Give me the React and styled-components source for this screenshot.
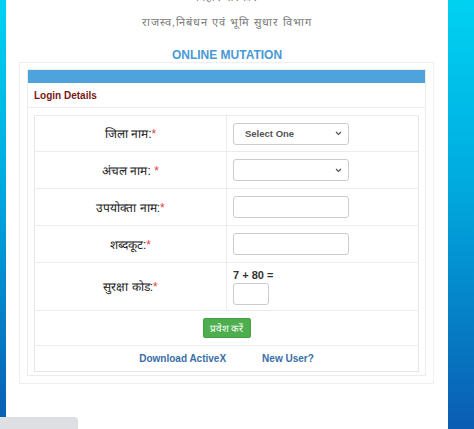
import React from 'react'
import styled, { createGlobalStyle } from 'styled-components'

const Global = createGlobalStyle`
  html, body {
    margin: 0;
    padding: 0;
    height: 429px;
    overflow: hidden;
  }
  body {
    background: linear-gradient(180deg, #00d2f2 0%, #00a8de 45%, #0a5cb2 100%);
    font-family: "Liberation Sans", Arial, sans-serif;
  }
`

const Page = styled.div`
  margin-left: 6px;
  width: 442px;
  height: 429px;
  background: #fff;
  overflow: hidden;
`

const Header = styled.div`
  text-align: center;
  color: #777;
  font-size: 11px;
  letter-spacing: 1px;
`

const HeadLine = styled.div`
  height: ${p => p.h}px;
  line-height: ${p => p.h}px;
  margin-top: ${p => p.top || 0}px;
`

const Title = styled.h3`
  margin: 14px 0 0;
  text-align: center;
  color: #4a98d4;
  font-size: 12px;
  font-weight: bold;
  height: 14px;
  line-height: 14px;
`

const Outer = styled.div`
  margin: 0 0 0 13px;
  width: 399px;
  padding: 6px 7px 7px;
  border: 1px solid #eee;
`

const Panel = styled.div`
  border: 1px solid #ececec;
`

const PanelBar = styled.div`
  height: 13px;
  background: #4fa3dd;
`

const PanelTitle = styled.div`
  height: 24px;
  line-height: 26px;
  padding-left: 6px;
  color: #7b1616;
  font-size: 10px;
  font-weight: bold;
  border-bottom: 1px solid #eee;
`

const PanelBody = styled.div`
  padding: 7px 6px 3px;
`

const Table = styled.table`
  width: 100%;
  border-collapse: collapse;
  border: 1px solid #e6e6e6;
`

const Row = styled.tr`
  height: ${p => p.h}px;
  border-top: 1px solid #ececec;
`

const Label = styled.td`
  width: 191px;
  padding: 0;
  text-align: center;
  font-size: 12px;
  color: #222;
  border-right: 1px solid #ececec;
`

const Field = styled.td`
  padding: 0 0 0 6px;
  vertical-align: middle;
`

const Star = styled.span`
  color: #e53b3b;
`

const Box = styled.div`
  box-sizing: border-box;
  width: ${p => p.w || 116}px;
  height: 22px;
  border: 1px solid #ccc;
  border-radius: 3px;
  background: #fff;
  display: flex;
  align-items: center;
  justify-content: space-between;
  padding: 0 6px 0 11px;
  font-size: 9.5px;
  font-weight: bold;
  color: #555;
`

const Chevron = styled.svg`
  width: 7px;
  height: 5px;
`

const Sum = styled.div`
  font-size: 11px;
  font-weight: bold;
  color: #333;
  margin-bottom: 2px;
`

const Center = styled.td`
  padding: 0;
  text-align: center;
`

const Button = styled.button`
  width: 48px;
  height: 20px;
  border: 1px solid #44a044;
  background: #4cae4c;
  color: #fff;
  font-size: 10px;
  border-radius: 2px;
  padding: 0;
  font-family: inherit;
`

const Links = styled.div`
  display: flex;
  justify-content: center;
  gap: 36px;
`

const LinkText = styled.a`
  color: #3a6ea8;
  font-size: 10px;
  font-weight: bold;
  text-decoration: none;
`

const StatusTip = styled.div`
  position: fixed;
  left: 0;
  bottom: 0;
  width: 78px;
  height: 12px;
  background: #dedfe2;
  border-top-right-radius: 4px;
`

function Select({ text }) {
  return (
    <Box>
      <span>{text}</span>
      <Chevron viewBox="0 0 7 5">
        <path d="M1 1 L3.5 3.5 L6 1" fill="none" stroke="#555" strokeWidth="1.2" />
      </Chevron>
    </Box>
  )
}

export default function App() {
  return (
    <>
      <Global />
      <Page>
        <Header>
          <HeadLine h={14} top={-10}>बिहार सरकार</HeadLine>
          <HeadLine h={24} top={6}>राजस्व,निबंधन एवं भूमि सुधार विभाग</HeadLine>
        </Header>
        <Title>ONLINE MUTATION</Title>
        <Outer>
          <Panel>
            <PanelBar />
            <PanelTitle>Login Details</PanelTitle>
            <PanelBody>
              <Table>
                <tbody>
                  <Row h={36}>
                    <Label>जिला नाम:<Star>*</Star></Label>
                    <Field><Select text="Select One" /></Field>
                  </Row>
                  <Row h={37}>
                    <Label>अंचल नाम: <Star>*</Star></Label>
                    <Field><Select text="" /></Field>
                  </Row>
                  <Row h={37}>
                    <Label>उपयोक्ता नाम:<Star>*</Star></Label>
                    <Field><Box /></Field>
                  </Row>
                  <Row h={37}>
                    <Label>शब्दकूट:<Star>*</Star></Label>
                    <Field><Box /></Field>
                  </Row>
                  <Row h={48}>
                    <Label>सुरक्षा कोड:<Star>*</Star></Label>
                    <Field>
                      <Sum>7 + 80 =</Sum>
                      <Box w={36} />
                    </Field>
                  </Row>
                  <Row h={35}>
                    <Center colSpan={2}><Button>प्रवेश करें</Button></Center>
                  </Row>
                  <Row h={26}>
                    <Center colSpan={2}>
                      <Links>
                        <LinkText href="#">Download ActiveX</LinkText>
                        <LinkText href="#">New User?</LinkText>
                      </Links>
                    </Center>
                  </Row>
                </tbody>
              </Table>
            </PanelBody>
          </Panel>
        </Outer>
      </Page>
      <StatusTip />
    </>
  )
}
